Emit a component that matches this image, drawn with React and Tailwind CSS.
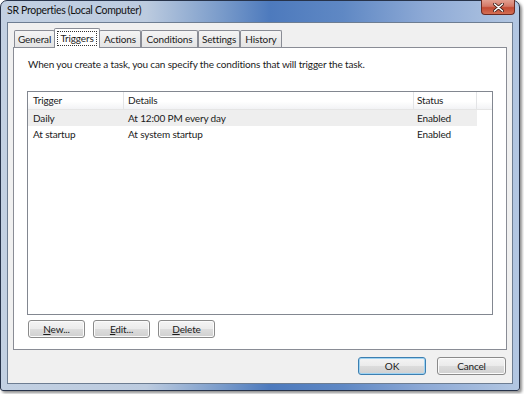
import React from 'react';

const FONT = "font-['Lato','Noto_Sans',sans-serif]";

const TABS = [
  { label: 'General', w: 'w-[41px]' },
  { label: 'Triggers', w: 'w-[46px]', active: true },
  { label: 'Actions', w: 'w-[42px]' },
  { label: 'Conditions', w: 'w-[57px]' },
  { label: 'Settings', w: 'w-[42px]' },
  { label: 'History', w: 'w-[42px]' },
];

const ROWS = [
  { trigger: 'Daily', details: 'At 12:00 PM every day', status: 'Enabled', hot: true },
  { trigger: 'At startup', details: 'At system startup', status: 'Enabled' },
];

function Button({ children, width, def }) {
  return (
    <button
      className={`${width} h-[18px] rounded-[3px] border text-[10px] leading-none text-[#1b1b1b] bg-[linear-gradient(#f4f4f4_0%,#ebebeb_48%,#dcdcdc_52%,#d0d0d0_100%)] ${
        def ? 'border-[#3c7fb1] shadow-[inset_0_0_0_1px_#9fd3f2]' : 'border-[#8a8a8a] shadow-[inset_0_0_0_1px_#fbfbfb]'
      }`}
    >
      {children}
    </button>
  );
}

export default function App() {
  return (
    <div className={`w-[524px] h-[394px] bg-white ${FONT} text-[10px] tracking-[-0.15px] text-[#1b1b1b]`}>
      {/* window frame */}
      <div className="w-[520px] h-[391px] rounded-t-[7px] rounded-b-[3px] border border-[#27334a] shadow-[2px_2px_3px_rgba(0,0,0,0.45)] bg-[linear-gradient(to_right,#c2d0e2_0%,#bccbdf_28%,#7c9dcb_42%,#4d7abd_52%,#5f88c4_66%,#8eaad6_82%,#b3c7e2_100%)] flex flex-col">
        {/* title bar */}
        <div className="h-[21px] flex items-start justify-between pl-[6px] pr-[4px]">
          <span className="pt-[2px] text-[10.5px] tracking-[-0.3px] text-[#111]">SR Properties (Local Computer)</span>
          <div className="w-[34px] h-[15px] -mt-px rounded-b-[4px] border border-t-0 border-[#6b2a22] bg-[linear-gradient(#e3a091_0%,#d47867_45%,#c34a33_55%,#d36f55_100%)] flex items-center justify-center">
            <svg width="11" height="9" viewBox="0 0 11 9">
              <path d="M1.5 1 L9.5 8 M9.5 1 L1.5 8" stroke="#3b1a14" strokeWidth="3" strokeLinecap="round" />
              <path d="M1.5 1 L9.5 8 M9.5 1 L1.5 8" stroke="#fff" strokeWidth="1.6" strokeLinecap="round" />
            </svg>
          </div>
        </div>

        {/* client area */}
        <div className="flex-1 mx-[6px] mb-[6px] border border-[#6d7d92] bg-[#f0f0f0] flex flex-col px-[5px]">
          {/* tabs */}
          <div className="flex items-end h-[18px] mt-[6px] pl-[1px]">
            {TABS.map(t =>
              t.active ? (
                <div
                  key={t.label}
                  className={`${t.w} h-[20px] -mx-[1px] -mb-px relative z-10 bg-white border border-b-0 border-[#898c95] rounded-t-[2px] flex items-center justify-center`}
                >
                  <span className="px-[2px] leading-[13px] outline outline-1 outline-dotted outline-[#333]">{t.label}</span>
                </div>
              ) : (
                <div
                  key={t.label}
                  className={`${t.w} h-[17px] bg-[linear-gradient(#f4f4f4,#e4e4e4)] border border-b-0 border-[#898c95] rounded-t-[2px] flex items-center justify-center`}
                >
                  {t.label}
                </div>
              )
            )}
          </div>

          {/* tab panel */}
          <div className="h-[303px] bg-white border border-[#898c95] flex flex-col px-[13px]">
            <p className="mt-[8px] h-[16px] pl-px leading-[16px]">
              When you create a task, you can specify the conditions that will trigger the task.
            </p>

            {/* list view */}
            <div className="mt-[19px] h-[224px] border border-[#828790] flex flex-col">
              <div className="h-[18px] flex bg-[linear-gradient(#ffffff_0%,#ffffff_55%,#f2f3f5_100%)] border-b border-[#e5e5e5]">
                <div className="w-[96px] pl-[5px] flex items-center border-r border-[#e3e4e6]">Trigger</div>
                <div className="w-[290px] pl-[4px] flex items-center border-r border-[#e3e4e6]">Details</div>
                <div className="w-[63px] pl-[3px] flex items-center border-r border-[#e3e4e6]">Status</div>
                <div className="flex-1" />
              </div>
              {ROWS.map(r => (
                <div key={r.trigger} className={`w-[449px] h-[16px] flex items-center ${r.hot ? 'bg-[#eeeeee]' : ''}`}>
                  <div className="w-[96px] pl-[5px]">{r.trigger}</div>
                  <div className="w-[290px] pl-[4px]">{r.details}</div>
                  <div className="w-[63px] pl-[3px]">{r.status}</div>
                </div>
              ))}
            </div>

            <div className="flex gap-[8px] mt-[5px] pl-px">
              <Button width="w-[57px]"><span className="underline">N</span>ew...</Button>
              <Button width="w-[57px]"><span className="underline">E</span>dit...</Button>
              <Button width="w-[57px]"><span className="underline">D</span>elete</Button>
            </div>
          </div>

          {/* dialog buttons */}
          <div className="flex justify-end gap-[11px] mt-[7px] pr-[1px]">
            <Button width="w-[68px]" def>OK</Button>
            <Button width="w-[69px]">Cancel</Button>
          </div>
        </div>
      </div>
    </div>
  );
}
